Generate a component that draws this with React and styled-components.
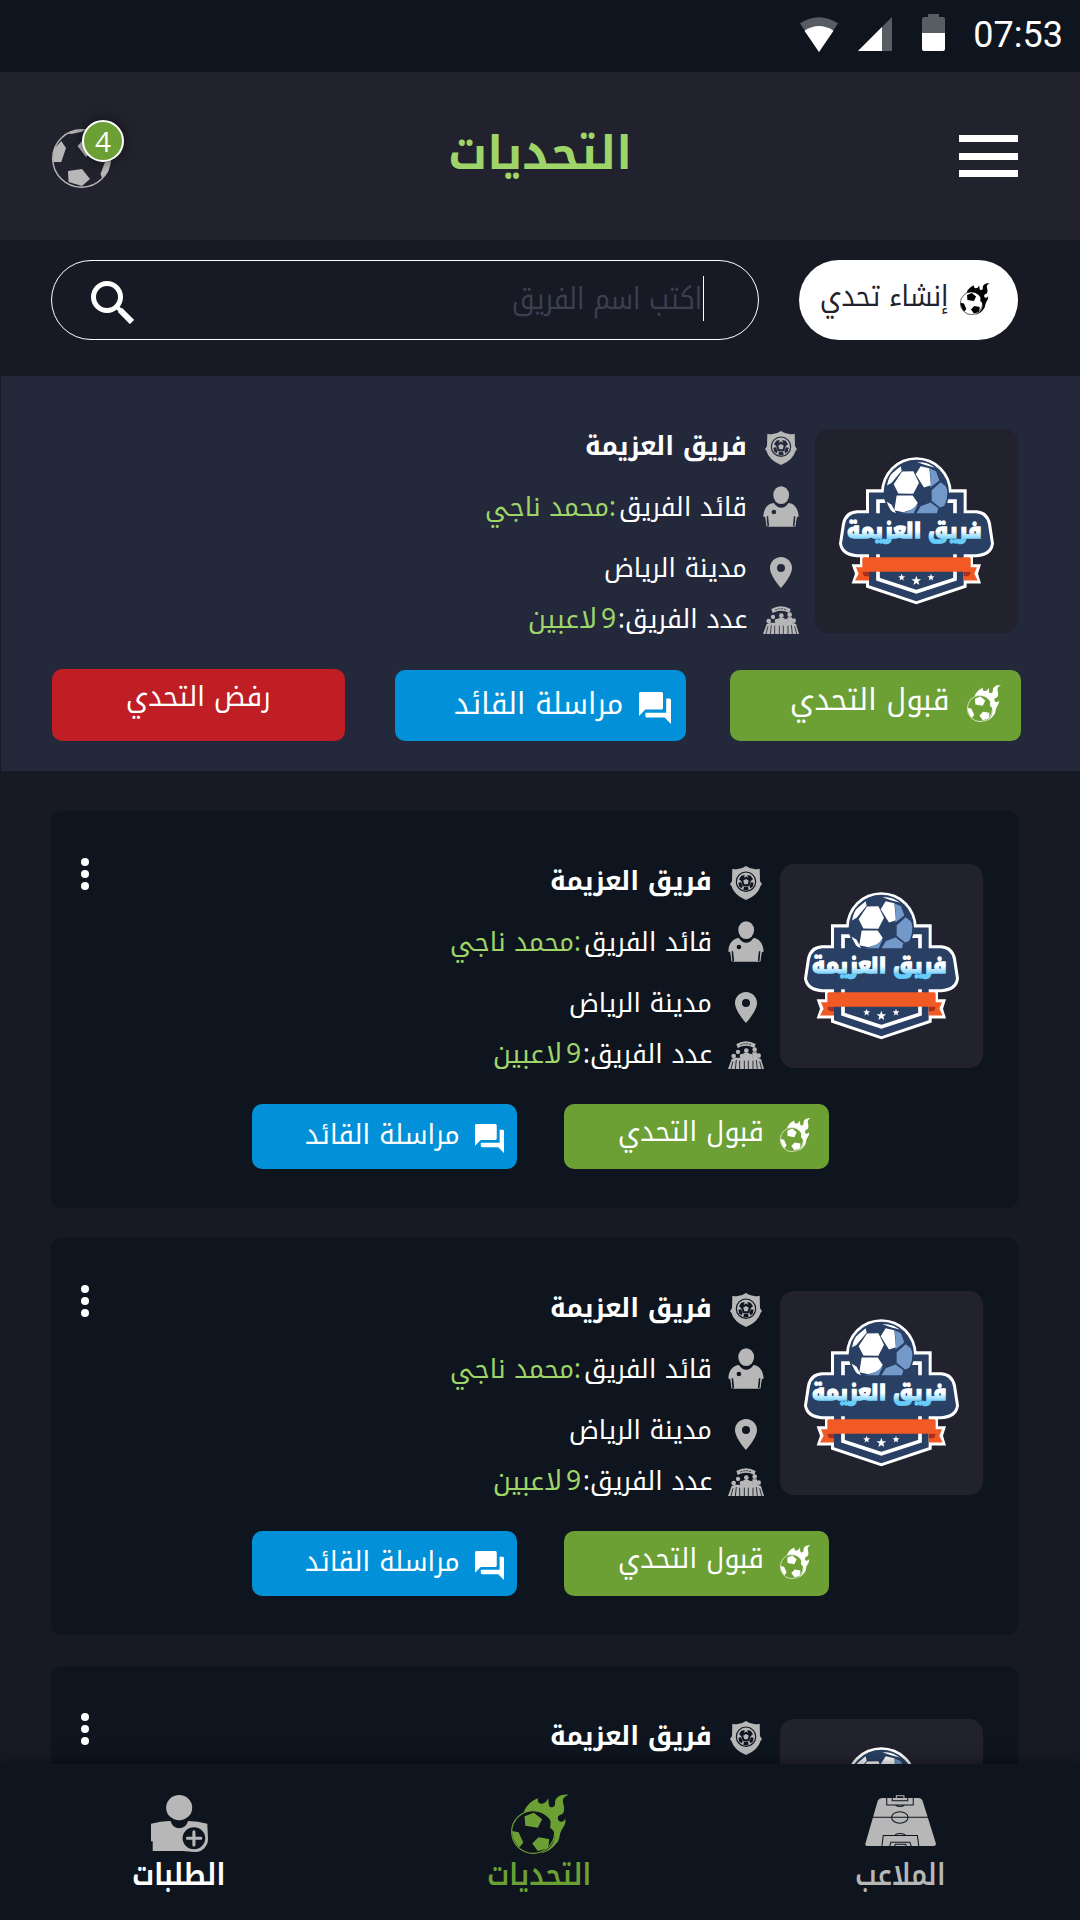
import React, { useLayoutEffect, useRef, useState } from 'react';
import styled, { createGlobalStyle } from 'styled-components';

const C = {
  page: '#171a25',
  dark: '#0e151e',
  panel: '#21222d',
  highlight: '#23283b',
  grey: '#b7b7b7',
  green: '#6ca035',
  lime: '#9ed468',
  blue: '#0291d9',
  red: '#be1e24',
  navy: '#294064',
};

const FONT = "'Noto Kufi Arabic', 'Noto Sans Arabic', 'Noto Sans', 'DejaVu Sans', sans-serif";

const Global = createGlobalStyle`
  body { margin: 0; background: ${C.page}; }
  * { box-sizing: border-box; }
  svg { display: block; flex: none; }
`;

const Screen = styled.div`
  width: 1080px;
  height: 1920px;
  overflow: hidden;
  display: flex;
  flex-direction: column;
  direction: rtl;
  background: ${C.page};
  color: #fff;
  font-family: ${FONT};
`;

/* ---------- text fitted to a column width ---------- */

const FitBox = styled.span`
  display: block;
  flex: none;
  width: ${p => p.$w}px;
  height: ${p => p.$h || 40}px;
  line-height: ${p => p.$h || 40}px;
  font-size: ${p => p.$size}px;
  font-weight: ${p => p.$weight || 450};
  color: ${p => p.$color || 'inherit'};
  margin-bottom: ${p => (p.$up || 0) * 2}px;
  word-spacing: ${p => p.$space || 0}px;
  white-space: nowrap;
`;
const FitInner = styled.span`
  display: inline-block;
  transform-origin: right center;
`;
function Fit({ w, h, size, weight, color, up, space, children }) {
  const ref = useRef(null);
  const [k, setK] = useState(1);
  useLayoutEffect(() => {
    if (ref.current && ref.current.offsetWidth) setK(w / ref.current.offsetWidth);
  }, [w]);
  return (
    <FitBox $w={w} $h={h} $size={size} $weight={weight} $color={color} $up={up} $space={space}>
      <FitInner ref={ref} style={{ transform: `scaleX(${k})` }}>{children}</FitInner>
    </FitBox>
  );
}

/* ---------- icons ---------- */

const IconSlot = styled.span`
  flex: none;
  display: flex;
  justify-content: center;
  width: ${p => (p.$w ? `${p.$w}px` : 'auto')};
  margin-top: ${p => (p.$down || 0) * 2}px;
  margin-bottom: ${p => (p.$up || 0) * 2}px;
`;

const FlameBall = ({ w, h, color }) => (
  <svg width={w} height={h} viewBox="59 40 175 183" preserveAspectRatio="none" fill={color}>
    <path d="M97 97C104 76 120 60 141 53C138 62 143 70 151 70C161 69 168 63 170 54C175 62 170 72 176 79C184 84 193 77 192 70C190 50 208 40 233 42C219 47 214 55 216 66C218 77 222 86 217 97C213 104 203 102 200 111C199 121 207 127 214 124C219 122 221 119 223 115C225 131 219 139 211 151C204 162 208 180 196 190C185 205 169 218 148 221C169 213 184 199 188 182C196 160 188 152 177 143C178 134 179 128 178 120C160 93 126 84 97 97Z" />
    <ellipse cx="126" cy="156" rx="65" ry="65" fill="none" stroke={color} strokeWidth="3.5" />
    <path d="M100 108L128 97L153 117L140 143L102 137ZM62 153L82 157L96 188L84 203C72 190 63 175 62 153ZM123 191L142 172L174 177C174 190 172 200 168 206L140 214Z" />
  </svg>
);

const Ball = () => (
  <svg width="59" height="59" viewBox="0 0 59 59" fill={C.grey}>
    <circle cx="29.5" cy="29.5" r="28.8" fill="none" stroke={C.grey} strokeWidth="1.4" />
    <path d="M2 20L9.3 12L14 19L9.3 33L.7 33ZM16 42L30 40L38 50L30 57L16.5 53ZM25.5 17L33 9L48 14L34 28ZM58.6 32L53 33L48.5 45L50 49L56 43ZM15 4L30 .6L31 2.4L19 5Z" />
  </svg>
);

const Chat = ({ w, h }) => (
  <svg width={w} height={h} viewBox="2 2 20 20" preserveAspectRatio="none" fill="#fff">
    <path d="M21 6h-2v9H6v2c0 .55.45 1 1 1h11l4 4V7c0-.55-.45-1-1-1zm-4 6V3c0-.55-.45-1-1-1H3c-.55 0-1 .45-1 1v14l4-4h10c.55 0 1-.45 1-1z" />
  </svg>
);

const ShieldIcon = ({ bg }) => (
  <svg width="32" height="34" viewBox="46 33 96 102" fill={C.grey}>
    <path d="M53 41Q75 47 94 33Q113 47 135 41L136 78L142 88L138 92Q130 120 94 135Q58 120 50 92L46 88L52 78Z" />
    <circle cx="94" cy="80" r="29" fill="none" stroke={bg} strokeWidth="3.5" />
    <path d="M94 68L106 76L101 91H87L82 76Z" fill="none" stroke={bg} strokeWidth="6" />
    <path d="M80 62L90 60L88 69L79 77L73 73ZM108 62L98 60L100 69L109 77L115 73ZM117 83L109 82L104 93L107 100L114 95ZM71 83L79 82L84 93L81 100L74 95ZM88 95H100L102 104Q94 107 86 104Z" fill={bg} />
  </svg>
);

const CaptainIcon = ({ bg }) => (
  <svg width="36" height="41" viewBox="36 198 109 123" fill={C.grey}>
    <ellipse cx="91" cy="225" rx="24" ry="27" />
    <path d="M37 290C38 262 54 250 69 249C80 268 103 268 113 249C128 250 142 262 144 290L138 292L131 321H52L43 292Z" />
    <circle cx="69" cy="276" r="7" fill={bg} />
    <path d="M49 289L52 319M132 289L129 319" stroke={bg} strokeWidth="5" />
    <path d="M44 288L48 320M137 288L133 320" stroke={C.grey} strokeWidth="3" />
  </svg>
);

const PinIcon = () => (
  <svg width="22" height="31" viewBox="60 411 66 93" fill={C.grey}>
    <path fillRule="evenodd" d="M93 411C74 411 60 426 60 444C60 468 93 504 93 504S126 468 126 444C126 426 112 411 93 411ZM93 432A12 12 0 1 1 93 456A12 12 0 1 1 93 432Z" />
  </svg>
);

const TeamIcon = ({ bg }) => (
  <svg width="36" height="28" viewBox="36 557 108 84" fill={C.grey}>
    <path d="M61 566Q90 549 119 566L115 578Q90 565 65 578Z" />
    <path d="M73 569Q90 561 107 569" stroke={bg} strokeWidth="2.5" fill="none" strokeDasharray="6 3" />
    <circle cx="91" cy="586" r="7" />
    <circle cx="66" cy="590" r="6.5" />
    <circle cx="116" cy="583" r="7" />
    <circle cx="53" cy="602" r="7" />
    <circle cx="78" cy="602" r="7" />
    <circle cx="104" cy="602" r="7" />
    <circle cx="128" cy="601" r="7" />
    <path d="M47 611L58 607H124L135 611L144 641H36ZM82 593H100V612H82ZM109 591H123V610H109Z" />
    <path d="M51 618L45 641M61 614L58 641M71 616V641M85 616V641M97 616V641M111 616V641M121 614L124 641M131 618L137 641" stroke={bg} strokeWidth="2.5" />
  </svg>
);

const FieldIcon = () => (
  <svg width="71" height="51" viewBox="944 285 206 152" preserveAspectRatio="none" fill="none" stroke={C.dark} strokeWidth="3">
    <path fill={C.grey} stroke="none" d="M993 294H1100Q1108 294 1111 302L1150 430Q1150 437 1143 437H951Q944 437 945 430L981 302Q985 294 993 294Z" />
    <path stroke={C.grey} d="M1035 296V287H1057V296" />
    <path d="M1007 293V315H1084V293M1023 293V302H1068V293M1033 316Q1045 323 1058 316M965 351H1127M993 437L997 406H1096L1100 437M1016 437L1019 426H1074L1078 437M1030 437L1032 432H1062L1064 437M1031 404Q1045 396 1061 404" />
    <ellipse cx="1045" cy="352" rx="24" ry="17" />
  </svg>
);

const AddPersonIcon = () => (
  <svg width="57" height="57" viewBox="438 165 166 171" preserveAspectRatio="none" fill={C.grey}>
    <circle cx="520" cy="203" r="38" />
    <path d="M438 251Q470 242 495 243Q501 265 520 265Q540 265 546 243Q575 244 602 251L604 298A38 38 0 0 1 565 336L530 333H443V304H438Z" />
    <circle cx="563" cy="295" r="33" fill={C.dark} />
    <path d="M563 275V315M544 295H583" stroke={C.grey} strokeWidth="9" strokeLinecap="round" />
  </svg>
);

const star = (cx, cy, r) =>
  Array.from({ length: 10 }, (_, i) => {
    const a = -Math.PI / 2 + (i * Math.PI) / 5;
    const q = i % 2 ? r * 0.42 : r;
    return `${cx + q * Math.cos(a)},${cy + q * Math.sin(a)}`;
  }).join(' ');

const LogoText = styled.text`
  font-family: ${FONT};
  font-weight: 900;
  font-size: 64px;
  direction: rtl;
`;

const TeamLogo = ({ id }) => (
  <svg width="203" height="204" viewBox="45 57 609 611">
    <defs>
      <linearGradient id={`word${id}`} gradientUnits="userSpaceOnUse" x1="0" y1="335" x2="0" y2="403">
        <stop offset="0.4" stopColor="#fff" />
        <stop offset="0.78" stopColor="#66ccfa" />
      </linearGradient>
      <clipPath id={`ball${id}`}><circle cx="349" cy="247" r="93" /></clipPath>
    </defs>
    <g fill="#fff">
      <path d="M198 237H500V532L349 582L198 532Z" />
      <circle cx="349" cy="247" r="106" />
      <path d="M155 462H180V437H519V462H543L534 491L543 520H155L165 491Z" />
      <path d="M170 300H530Q565 303 573 340L582 400Q578 438 530 441H170Q122 438 117 400L126 340Q133 303 170 300Z" />
    </g>
    <path fill={C.navy} d="M207 247H491V525L349 573L207 525Z" />
    <path fill="none" stroke="#fff" strokeWidth="11" d="M234 273H465V507L349 545L234 507Z" />
    <circle cx="349" cy="247" r="98" fill={C.navy} />
    <g clipPath={`url(#ball${id})`}>
      <path fill="#fff" d="M306 184L340 183L357 218L340 251L295 250L281 222ZM362 168L388 174L393 225L372 232L347 192ZM290 256L338 256L353 278L345 295L310 306L283 300ZM302 168L305 182L275 218L261 226L268 196ZM256 272L275 284L288 309L268 300ZM352 156L385 157L405 172L380 166Z" />
      <path fill="#7399cb" d="M388 174L408 183L418 211L391 232Q394 200 388 174ZM395 240L422 216L437 228L446 250L438 285L420 292L395 272ZM362 288L392 277L415 294L410 312H348ZM345 289L349 283L353 284L345 300L340 312H292Q330 305 345 289Z" />
    </g>
    <path fill={C.navy} d="M172 309H528Q558 311 564 342L573 400Q569 429 528 432H172Q131 429 126 400L135 342Q141 311 172 309Z" />
    <LogoText x="343" y="383" textAnchor="middle" textLength="404" lengthAdjust="spacingAndGlyphs" fill={`url(#word${id})`} stroke={`url(#word${id})`} strokeWidth="4">
      فريق العزيمة
    </LogoText>
    <path fill="#f15a24" d="M168 471H207V511H165L176 491ZM531 471H491V511H533L523 491Z" />
    <path fill="#a9301f" d="M188 484H207V498H194Q188 496 188 484ZM511 484H491V498H505Q511 496 511 484Z" />
    <rect x="187" y="441" width="325" height="44" rx="5" fill="#f15a24" />
    <g fill="#fff">
      <polygon points={star(305, 502, 11)} />
      <polygon points={star(349, 512, 15)} />
      <polygon points={star(393, 502, 11)} />
    </g>
  </svg>
);

/* ---------- status bar ---------- */

const StatusBar = styled.div`
  flex: none;
  direction: ltr;
  height: 72px;
  background: ${C.dark};
  display: flex;
  justify-content: flex-end;
  align-items: flex-start;
  padding: 14px 17px 0 0;
`;
const StatusIcon = styled.span`
  margin: ${p => p.$top}px ${p => p.$right}px 0 0;
`;
const Clock = styled.span`
  font: 400 36px/42px Roboto, sans-serif;
`;

/* ---------- header ---------- */

const Header = styled.header`
  flex: none;
  height: 168px;
  background: ${C.panel};
  display: grid;
  grid-template-columns: 1fr auto 1fr;
  align-items: center;
  padding: 0 52px;
`;
const Menu = styled.div`
  width: 59px;
  height: 42px;
  margin-right: 10px;
  display: flex;
  flex-direction: column;
  justify-content: space-between;
`;
const MenuBar = styled.i`
  height: 7px;
  background: #fff;
`;
const BallButton = styled.div`
  position: relative;
  justify-self: end;
  margin-top: 5px;
`;
const Badge = styled.span`
  position: absolute;
  left: 30px;
  top: -9px;
  width: 42px;
  height: 42px;
  border: 2px solid #fff;
  border-radius: 50%;
  background: ${C.green};
  box-shadow: 0 0 12px rgba(0, 0, 0, 0.55);
  font: 500 28px/38px 'Open Sans', 'Noto Sans', sans-serif;
  text-align: center;
`;

/* ---------- search ---------- */

const SearchRow = styled.div`
  flex: none;
  height: 136px;
  display: flex;
  align-items: flex-start;
  gap: 40px;
  padding: 20px 62px 0 51px;
`;
const CreateButton = styled.div`
  width: 219px;
  height: 80px;
  border-radius: 40px;
  background: #fff;
  color: #21222d;
  display: flex;
  align-items: center;
  gap: 12px;
  padding-right: 28px;
`;
const SearchField = styled.div`
  flex: 1;
  height: 80px;
  border: 1px solid #fff;
  border-radius: 40px;
  display: flex;
  align-items: center;
  gap: 1px;
  padding: 0 54px 0 39px;
`;
const Caret = styled.i`
  width: 1px;
  height: 45px;
  background: #fff;
  margin-bottom: 3px;
`;
const SearchIcon = styled.span`
  margin: 5px auto 0 0;
`;

/* ---------- team info ---------- */

const Highlight = styled.section`
  flex: none;
  height: 395px;
  margin-left: 1px;
  background: ${C.highlight};
  padding: 38px 62px 0 51px;
`;
const List = styled.main`
  flex: 1;
  min-height: 0;
  overflow: hidden;
  display: flex;
  flex-direction: column;
  padding: 40px 62px 0 51px;
`;
const Card = styled.article`
  flex: none;
  height: 397px;
  margin-bottom: ${p => p.$gap}px;
  border-radius: 10px;
  background: ${C.dark};
  padding: 38px 35px 0 30px;
`;
const TeamTop = styled.div`
  display: flex;
  align-items: flex-start;
  height: 255px;
`;
const LogoBox = styled.div`
  flex: none;
  width: 203px;
  height: 204px;
  margin-top: 15px;
  border-radius: 14px;
  background: ${C.panel};
`;
const Info = styled.div`
  flex: 1;
  display: grid;
  grid-template-rows: 62px 61px 60px 42px;
  padding-right: 16px;
`;
const InfoRow = styled.div`
  display: flex;
  align-items: center;
`;
const InfoText = styled.div`
  display: flex;
  gap: ${p => p.$gap || 0}px;
  margin-right: 16px;
  margin-top: ${p => (p.$down || 0) * 2}px;
`;
const Kebab = styled.div`
  flex: none;
  width: 8px;
  height: 32px;
  margin-top: 9px;
  display: flex;
  flex-direction: column;
  justify-content: space-between;
`;
const Dot = styled.i`
  width: 8px;
  height: 8px;
  border-radius: 50%;
  background: #fff;
`;

/* ---------- buttons ---------- */

const WideActions = styled.div`
  display: flex;
  align-items: flex-end;
  height: 72px;
  margin-right: -3px;
`;
const CardActions = styled.div`
  display: flex;
  gap: 47px;
  margin-right: 154px;
`;
const Button = styled.div`
  flex: none;
  width: ${p => p.$w}px;
  height: ${p => p.$h}px;
  margin-right: ${p => p.$gap || 0}px;
  border-radius: 10px;
  background: ${p => p.$bg};
  display: flex;
  align-items: center;
  gap: ${p => p.$inner || 0}px;
  padding-right: ${p => p.$pad}px;
`;

/* ---------- bottom navigation ---------- */

const Nav = styled.nav`
  flex: none;
  position: relative;
  height: 156px;
  background: ${C.dark};
  box-shadow: 0 0 14px rgba(0, 0, 0, 0.5);
  display: flex;
  justify-content: space-between;
  padding: 30px 130px 0 129px;
`;
const NavItem = styled.div`
  width: 100px;
  display: flex;
  flex-direction: column;
  align-items: center;
`;
const NavIcon = styled.span`
  height: 60px;
  padding-top: ${p => p.$top}px;
`;
const NavLabel = styled.div`
  margin-top: 1px;
`;

function TeamInfo({ bg, id, menu }) {
  return (
    <TeamTop>
      <LogoBox><TeamLogo id={id} /></LogoBox>
      <Info>
        <InfoRow>
          <IconSlot $w={36} $down={3}><ShieldIcon bg={bg} /></IconSlot>
          <InfoText $down={1}><Fit w={162} size={26.5} weight={700}>فريق العزيمة</Fit></InfoText>
        </InfoRow>
        <InfoRow>
          <IconSlot $w={36}><CaptainIcon bg={bg} /></IconSlot>
          <InfoText $gap={3}>
            <Fit w={128} size={26.5}>قائد الفريق</Fit>
            <Fit w={131} size={26.5} color={C.lime}>:محمد ناجي</Fit>
          </InfoText>
        </InfoRow>
        <InfoRow>
          <IconSlot $w={36} $down={5.5}><PinIcon /></IconSlot>
          <InfoText $down={1}><Fit w={143} size={26.5}>مدينة الرياض</Fit></InfoText>
        </InfoRow>
        <InfoRow>
          <IconSlot $w={36} $down={2}><TeamIcon bg={bg} /></IconSlot>
          <InfoText $gap={2} $down={1}>
            <Fit w={129} size={26.5}>عدد الفريق:</Fit>
            <Fit w={88} size={27} color={C.lime} space={-5}>9 لاعبين</Fit>
          </InfoText>
        </InfoRow>
      </Info>
      {menu && <Kebab><Dot /><Dot /><Dot /></Kebab>}
    </TeamTop>
  );
}

function TeamCard({ id, gap }) {
  return (
    <Card $gap={gap}>
      <TeamInfo bg={C.dark} id={id} menu />
      <CardActions>
        <Button $w={265} $h={65} $bg={C.green} $pad={18} $inner={16}>
          <IconSlot $up={2}><FlameBall w={31} h={34} color="#fff" /></IconSlot>
          <Fit w={146} size={27.5} up={5}>قبول التحدي</Fit>
        </Button>
        <Button $w={265} $h={65} $bg={C.blue} $pad={13} $inner={15}>
          <IconSlot $down={2}><Chat w={29} h={29} /></IconSlot>
          <Fit w={155} size={27.5} up={2}>مراسلة القائد</Fit>
        </Button>
      </CardActions>
    </Card>
  );
}

export default function App() {
  return (
    <Screen>
      <Global />
      <StatusBar>
        <StatusIcon $top={3} $right={20}>
          <svg width="38" height="35" viewBox="755 50 110 105" preserveAspectRatio="none">
            <path fill="#585d64" d="M810 155L755 69Q810 32 865 69Z" />
            <path fill="#fff" d="M810 155L768 91Q810 63 852 91Z" />
          </svg>
        </StatusIcon>
        <StatusIcon $top={3} $right={30}>
          <svg width="34" height="34" viewBox="0 0 34 34">
            <path fill="#585d64" d="M34 0V34H0Z" />
            <path fill="#fff" d="M24 10V34H0Z" />
          </svg>
        </StatusIcon>
        <StatusIcon $top={0} $right={28}>
          <svg width="23" height="37" viewBox="0 0 23 37">
            <path fill="#585d64" d="M6 0H17V3H21Q23 3 23 5V19H0V5Q0 3 2 3H6Z" />
            <path fill="#fff" d="M0 19H23V35Q23 37 21 37H2Q0 37 0 35Z" />
          </svg>
        </StatusIcon>
        <Clock>07:53</Clock>
      </StatusBar>

      <Header>
        <Menu><MenuBar /><MenuBar /><MenuBar /></Menu>
        <Fit w={184} h={60} size={46} weight={700} color={C.lime} up={2.5}>التحديات</Fit>
        <BallButton><Ball /><Badge>4</Badge></BallButton>
      </Header>

      <SearchRow>
        <CreateButton>
          <IconSlot $up={1.5}><FlameBall w={30} h={32} color="#000" /></IconSlot>
          <Fit w={128} size={29} up={3.5}>إنشاء تحدي</Fit>
        </CreateButton>
        <SearchField>
          <Caret />
          <Fit w={190} size={30} color="#3d3f51" up={1.5}>اكتب اسم الفريق</Fit>
          <SearchIcon>
            <svg width="43" height="43" viewBox="0 0 43 43" fill="none" stroke="#fff">
              <circle cx="16" cy="16" r="13.5" strokeWidth="5" />
              <path d="M25.5 25.5L30 30" strokeWidth="4" />
              <path d="M29 29L41 41" strokeWidth="6" />
            </svg>
          </SearchIcon>
        </SearchField>
      </SearchRow>

      <Highlight>
        <TeamInfo bg={C.highlight} id="a" />
        <WideActions>
          <Button $w={291} $h={71} $bg={C.green} $pad={20} $inner={17}>
            <IconSlot $up={2.5}><FlameBall w={34} h={37} color="#fff" /></IconSlot>
            <Fit w={160} size={30} up={6}>قبول التحدي</Fit>
          </Button>
          <Button $w={291} $h={71} $bg={C.blue} $pad={15} $inner={16} $gap={44}>
            <IconSlot $down={2}><Chat w={32} h={32} /></IconSlot>
            <Fit w={169} size={30} up={2}>مراسلة القائد</Fit>
          </Button>
          <Button $w={293} $h={72} $bg={C.red} $pad={74} $gap={50}>
            <Fit w={145} size={28} up={8}>رفض التحدي</Fit>
          </Button>
        </WideActions>
      </Highlight>

      <List>
        <TeamCard id="b" gap={30} />
        <TeamCard id="c" gap={31} />
        <TeamCard id="d" gap={0} />
      </List>

      <Nav>
        <NavItem>
          <NavIcon $top={1}><FieldIcon /></NavIcon>
          <NavLabel><Fit w={90} size={30} weight={650} color={C.grey}>الملاعب</Fit></NavLabel>
        </NavItem>
        <NavItem>
          <NavIcon $top={0}><FlameBall w={58} h={60} color={C.green} /></NavIcon>
          <NavLabel><Fit w={104} size={30} weight={650} color={C.green}>التحديات</Fit></NavLabel>
        </NavItem>
        <NavItem>
          <NavIcon $top={1}><AddPersonIcon /></NavIcon>
          <NavLabel><Fit w={93} size={30} weight={700}>الطلبات</Fit></NavLabel>
        </NavItem>
      </Nav>
    </Screen>
  );
}
